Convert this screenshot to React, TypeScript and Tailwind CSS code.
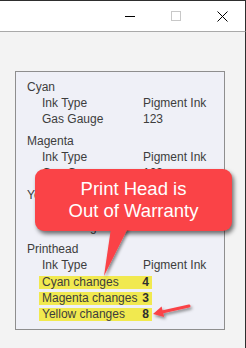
const groups = [
  { name: "Cyan", rows: [["Ink Type", "Pigment Ink"], ["Gas Gauge", "123"]] },
  { name: "Magenta", rows: [["Ink Type", "Pigment Ink"], ["Gas Gauge", "123"]] },
  { name: "Yellow", rows: [["Ink Type", "Pigment Ink"], ["Gas Gauge", "123"]] },
];

const changes = [
  ["Cyan changes", "4"],
  ["Magenta changes", "3"],
  ["Yellow changes", "8"],
];

function TitleBar() {
  return (
    <div className="flex h-[31px] justify-end border-t border-r border-[#2e2e2e] bg-white">
      <div className="flex w-[46px] items-center justify-center">
        <div className="h-px w-[10px] bg-black" />
      </div>
      <div className="flex w-[46px] items-center justify-center">
        <div className="h-[10px] w-[10px] border border-[#c8c8c8]" />
      </div>
      <div className="flex w-[46px] items-center justify-center">
        <svg width="11" height="11" viewBox="0 0 11 11">
          <path d="M0.5 0.5 L10.5 10.5 M10.5 0.5 L0.5 10.5" stroke="#000" strokeWidth="1" />
        </svg>
      </div>
    </div>
  );
}

export default function App() {
  return (
    <div
      className="relative h-[348px] w-[246px] overflow-hidden bg-[#f3f3f3]"
      style={{ fontFamily: '"Liberation Sans", Arial, sans-serif' }}
    >
      <TitleBar />
      <div className="h-[317px] border-t border-r border-t-[#a9a9a9] border-r-[#2e2e2e] pl-[15px] pt-[39px]">
        <div className="h-[259px] w-[210px] border border-[#8e8e8e] bg-[#eff0f7] pl-[11px] pt-[7px] text-[12px] leading-[16px] text-[#3d3d3d]">
          {groups.map((g) => (
            <div key={g.name} className="mb-[6px]">
              <div>{g.name}</div>
              {g.rows.map(([label, value]) => (
                <div key={label} className="grid grid-cols-[101px_1fr] pl-[15px]">
                  <span>{label}</span>
                  <span>{value}</span>
                </div>
              ))}
            </div>
          ))}
          <div>
            <div>Printhead</div>
            <div className="grid grid-cols-[101px_1fr] pl-[15px]">
              <span>Ink Type</span>
              <span>Pigment Ink</span>
            </div>
            {changes.map(([label, value]) => (
              <div key={label} className="ml-[12px] mt-[3px] flex h-[13px] w-[113px] items-center bg-[#f1e94f] leading-[13px]">
                <span className="w-[100px] pl-[3px]">{label}</span>
                <span className="w-[13px] text-center font-bold text-[#2e2e2e]">{value}</span>
              </div>
            ))}
          </div>
        </div>
      </div>

      {/* callout */}
      <div className="absolute left-[35px] top-[169px] flex h-[62px] w-[197px] flex-col items-center justify-center rounded-[9px] bg-[#fa4347] text-[18.5px] leading-[22px] text-white shadow-[2px_3px_4px_rgba(0,0,0,0.55)]">
        <div>Print Head is</div>
        <div>Out of Warranty</div>
      </div>
      <svg className="pointer-events-none absolute left-0 top-0" width="246" height="348">
        <defs>
          <filter id="sh" x="-50%" y="-50%" width="200%" height="200%">
            <feDropShadow dx="1.5" dy="2" stdDeviation="1.5" floodColor="#000" floodOpacity="0.45" />
          </filter>
        </defs>
        <polygon points="111,228 128,228 104,276" fill="#fa4347" filter="url(#sh)" />
        <rect x="105" y="222" width="30" height="8" fill="#fa4347" />
        <g filter="url(#sh)">
          <line x1="189" y1="306" x2="162" y2="312" stroke="#fa4347" strokeWidth="3" strokeLinecap="round" />
          <polygon points="153,314 164.2,317 161.6,306.6" fill="#fa4347" />
        </g>
      </svg>
    </div>
  );
}
